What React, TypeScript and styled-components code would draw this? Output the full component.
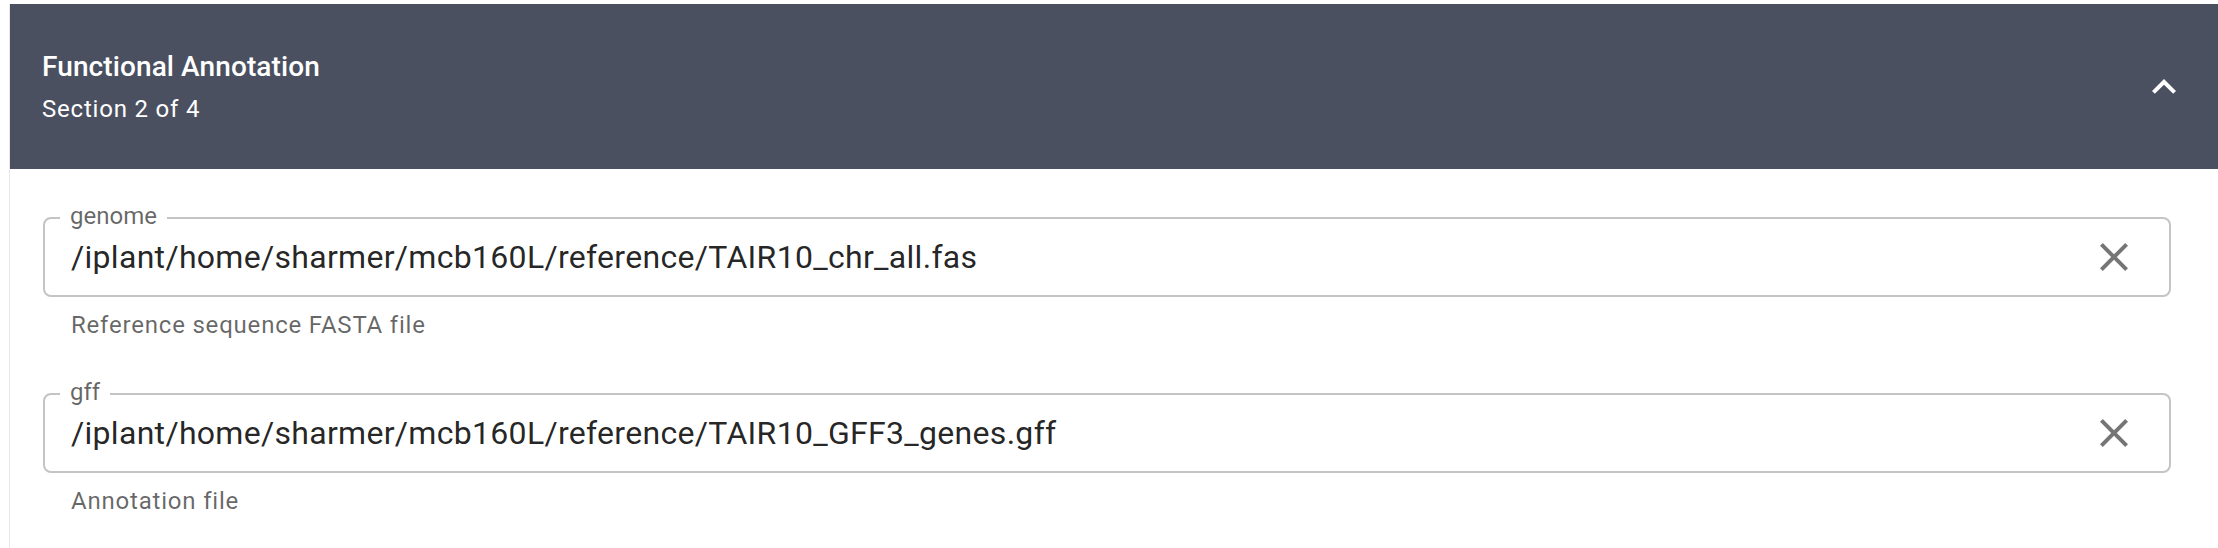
import React from "react";
import styled, { createGlobalStyle } from "styled-components";

const GlobalStyle = createGlobalStyle`
  html, body {
    margin: 0;
    padding: 0;
    background: #ffffff;
  }
  body {
    font-family: Roboto, "Liberation Sans", Arial, sans-serif;
    overflow: hidden;
  }
`;

const Page = styled.div`
  padding: 4px 0 0 9px;
`;

const Card = styled.section`
  background: #ffffff;
  border-left: 1px solid #e8e8e8;
  min-height: 544px;
`;

const Header = styled.header`
  display: flex;
  align-items: center;
  justify-content: space-between;
  box-sizing: border-box;
  height: 165px;
  padding: 0 30px 0 32px;
  background: #4a5060;
  color: #ffffff;
`;

const HeaderText = styled.div`
  display: flex;
  flex-direction: column;
`;

const Title = styled.div`
  font-size: 28px;
  font-weight: 500;
  line-height: 32px;
  letter-spacing: 0.1px;
`;

const Subtitle = styled.div`
  margin-top: 12px;
  font-size: 24px;
  font-weight: 400;
  line-height: 28px;
  letter-spacing: 0.8px;
`;

const IconButton = styled.button<{ $color: string }>`
  display: flex;
  align-items: center;
  justify-content: center;
  width: 48px;
  height: 48px;
  padding: 0;
  border: none;
  background: transparent;
  color: ${(p) => p.$color};
  cursor: pointer;
  flex: none;
  svg {
    width: 48px;
    height: 48px;
    fill: currentColor;
  }
`;

const Fields = styled.div`
  display: flex;
  flex-direction: column;
  gap: 48px;
  padding: 48px 47px 0 33px;
`;

const Field = styled.div`
  display: flex;
  flex-direction: column;
`;

const Outline = styled.div`
  position: relative;
  display: flex;
  align-items: center;
  box-sizing: border-box;
  height: 80px;
  padding: 0 31px 0 26px;
  border: 2px solid #c4c4c4;
  border-radius: 8px;
`;

const FloatingLabel = styled.span`
  position: absolute;
  left: 15px;
  top: -15px;
  padding: 0 10px;
  background: #ffffff;
  font-size: 24px;
  line-height: 24px;
  color: rgba(0, 0, 0, 0.6);
`;

const Value = styled.div`
  flex: 1;
  font-size: 32px;
  line-height: 46px;
  letter-spacing: 0.3px;
  color: rgba(0, 0, 0, 0.87);
  white-space: nowrap;
`;

const Helper = styled.div`
  margin: 8px 0 0 28px;
  font-size: 24px;
  line-height: 40px;
  letter-spacing: 0.8px;
  color: rgba(0, 0, 0, 0.6);
`;

const ExpandLess = () => (
  <svg viewBox="0 0 24 24" aria-hidden="true">
    <path d="M12 8l-6 6 1.41 1.41L12 10.83l4.59 4.58L18 14z" />
  </svg>
);

const CloseIcon = () => (
  <svg viewBox="0 0 24 24" aria-hidden="true">
    <path d="M19 6.41 17.59 5 12 10.59 6.41 5 5 6.41 10.59 12 5 17.59 6.41 19 12 13.41 17.59 19 19 17.59 13.41 12z" />
  </svg>
);

const fields = [
  {
    label: "genome",
    value: "/iplant/home/sharmer/mcb160L/reference/TAIR10_chr_all.fas",
    helper: "Reference sequence FASTA file",
  },
  {
    label: "gff",
    value: "/iplant/home/sharmer/mcb160L/reference/TAIR10_GFF3_genes.gff",
    helper: "Annotation file",
  },
];

export default function App() {
  return (
    <>
      <GlobalStyle />
      <Page>
        <Card>
          <Header>
            <HeaderText>
              <Title>Functional Annotation</Title>
              <Subtitle>Section 2 of 4</Subtitle>
            </HeaderText>
            <IconButton $color="#ffffff" aria-label="collapse">
              <ExpandLess />
            </IconButton>
          </Header>
          <Fields>
            {fields.map((f) => (
              <Field key={f.label}>
                <Outline>
                  <FloatingLabel>{f.label}</FloatingLabel>
                  <Value>{f.value}</Value>
                  <IconButton $color="rgba(0,0,0,0.54)" aria-label="clear">
                    <CloseIcon />
                  </IconButton>
                </Outline>
                <Helper>{f.helper}</Helper>
              </Field>
            ))}
          </Fields>
        </Card>
      </Page>
    </>
  );
}
